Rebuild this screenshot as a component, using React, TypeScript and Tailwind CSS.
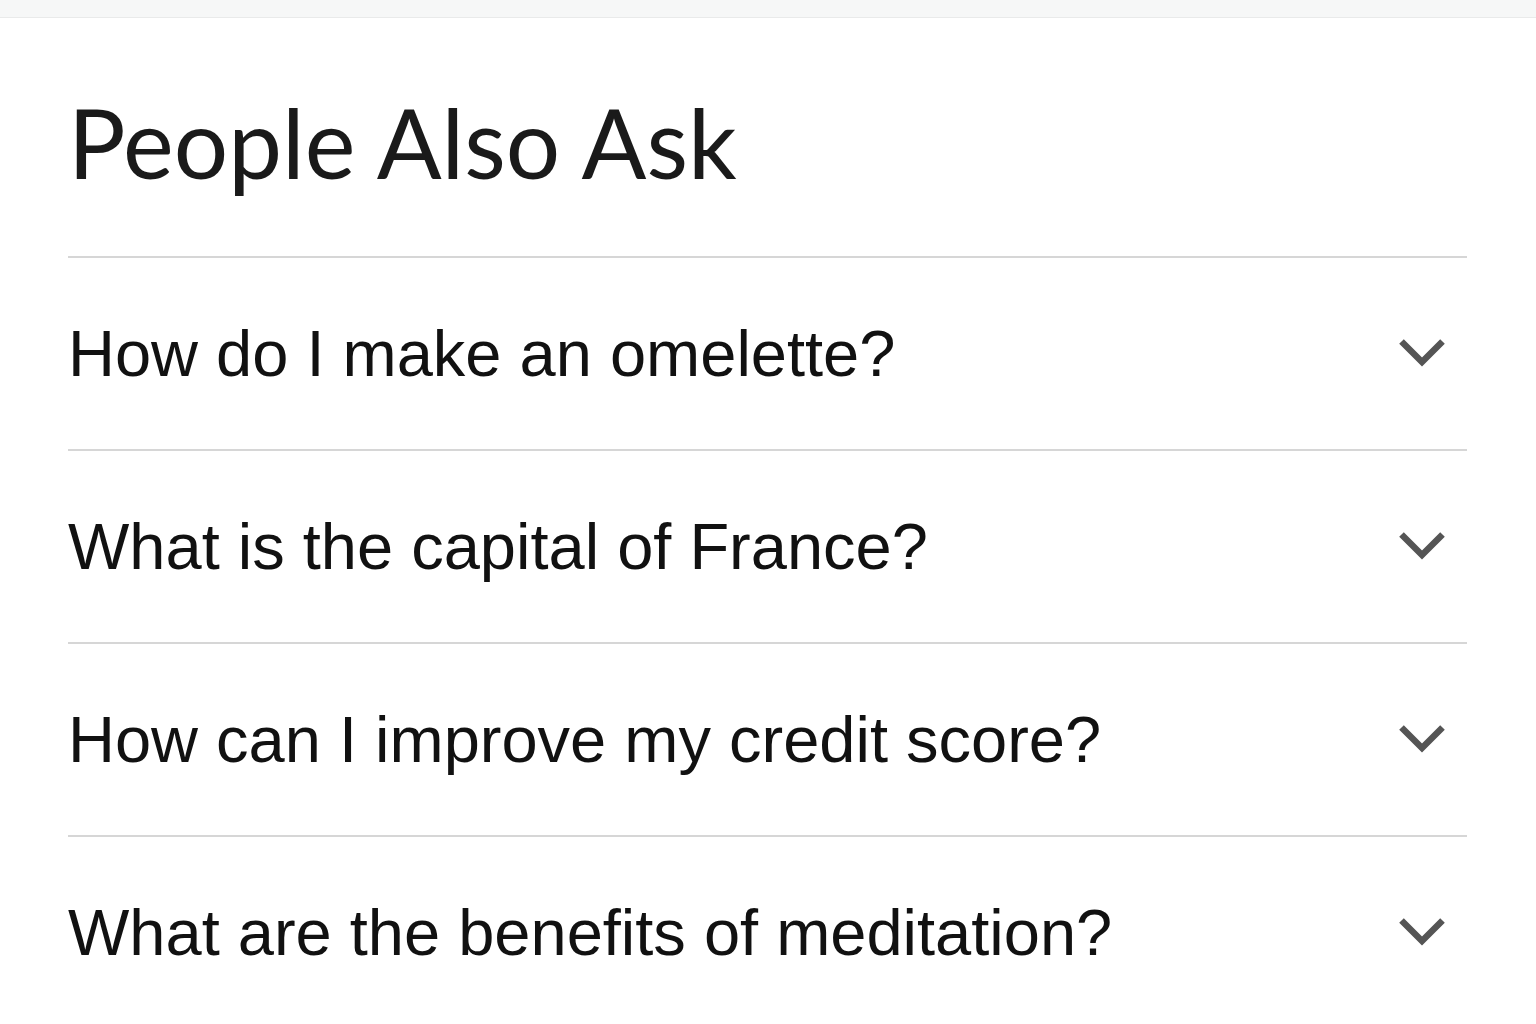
import React from "react";

const questions = [
  "How do I make an omelette?",
  "What is the capital of France?",
  "How can I improve my credit score?",
  "What are the benefits of meditation?",
];

function Chevron() {
  return (
    <svg width="48" height="30" viewBox="0 0 48 30" className="shrink-0">
      <polyline
        points="3.5,3.5 24,24 44.5,3.5"
        fill="none"
        stroke="#555555"
        strokeWidth="6.5"
        strokeLinecap="butt"
        strokeLinejoin="miter"
      />
    </svg>
  );
}

export default function App() {
  return (
    <div className="w-[1536px] h-[1024px] bg-white overflow-hidden">
      <div className="h-[18px] bg-[#f6f7f7] border-b border-[#e9eaea]" />
      <div className="pl-[68px] pr-[69px]">
        <h1
          className="pt-[76px] pb-[66px] text-[96px] leading-none text-[#1a1a1a] font-normal"
          style={{ fontFamily: "Lato, 'Open Sans', sans-serif" }}
        >
          People Also Ask
        </h1>
        {questions.map((q) => (
          <div
            key={q}
            className="h-[193px] border-t-2 border-[#d6d6d6] flex items-center justify-between"
          >
            <span
              className="text-[65px] leading-none text-[#111111]"
              style={{ fontFamily: "'Liberation Sans', Arial, sans-serif" }}
            >
              {q}
            </span>
            <div className="mr-[21px] mt-[-2px]">
              <Chevron />
            </div>
          </div>
        ))}
      </div>
    </div>
  );
}
